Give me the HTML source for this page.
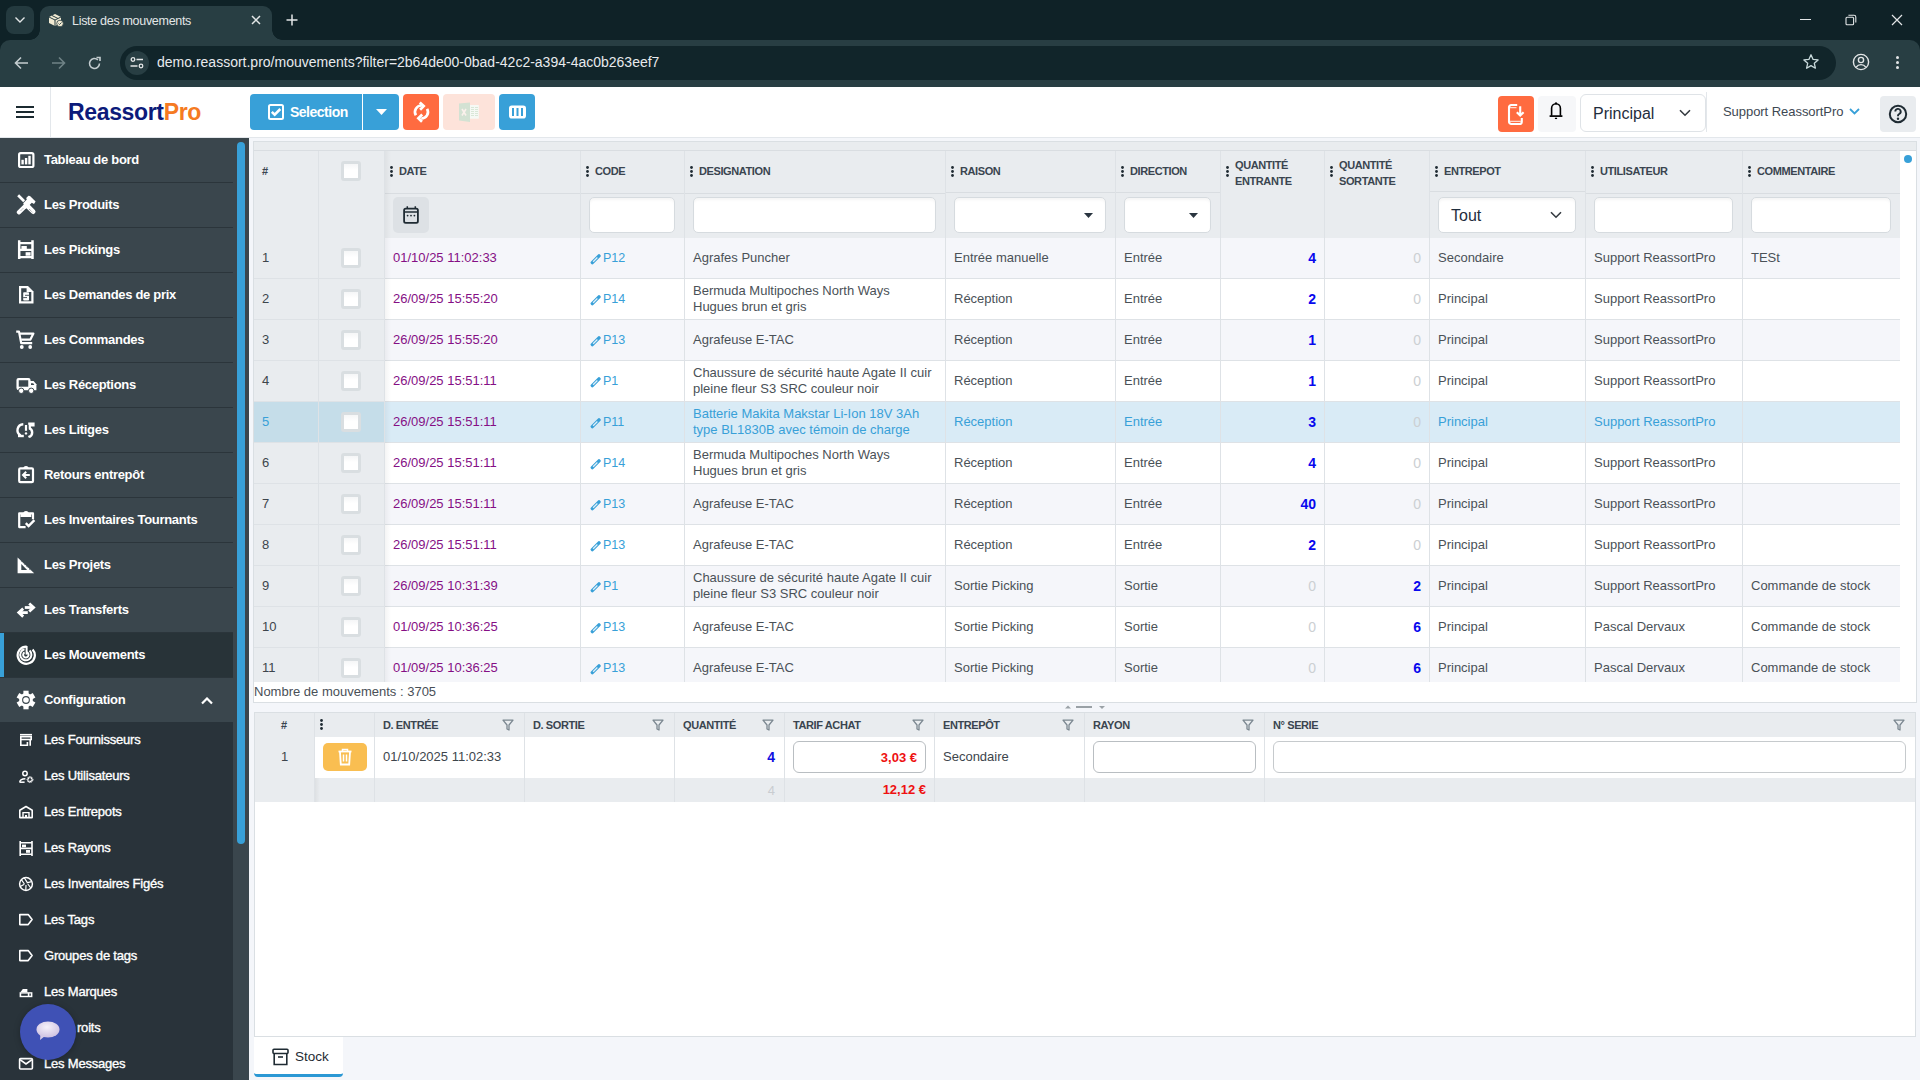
<!DOCTYPE html>
<html><head><meta charset="utf-8">
<style>
*{box-sizing:border-box;margin:0;padding:0}
html,body{width:1920px;height:1080px;overflow:hidden;background:#f4f6fa;font-family:"Liberation Sans",sans-serif;position:relative}
.abs{position:absolute}
svg{display:block}
/* chrome */
#tabstrip{left:0;top:0;width:1920px;height:52px;background:#0f2227}
#tabbtn{left:6px;top:6px;width:28px;height:28px;border-radius:8px;background:#243a3f}
#tab{left:40px;top:6px;width:232px;height:34px;background:#283e43;border-radius:9px 9px 0 0}
#tab:before,#tab:after{content:"";position:absolute;bottom:0;width:10px;height:10px;background:radial-gradient(circle at 0 0,transparent 10px,#283e43 10.5px)}
#tab:before{left:-10px;background:radial-gradient(circle at 0 0,transparent 9.5px,#283e43 10px)}
#tab:after{right:-10px;background:radial-gradient(circle at 100% 0,transparent 9.5px,#283e43 10px)}
#tabtitle{left:72px;top:14px;font-size:12.5px;letter-spacing:-0.3px;color:#e3e6e7;white-space:nowrap}
#toolbar{left:0;top:40px;width:1920px;height:47px;background:#283e43;border-radius:10px 10px 0 0}
#omni{left:120px;top:46px;width:1716px;height:34px;border-radius:17px;background:#11252a}
#siteinfo{left:125px;top:51px;width:24px;height:24px;border-radius:12px;background:#283e43}
#url{left:157px;top:54px;font-size:14px;color:#e8eaed;white-space:nowrap}
/* header */
#header{left:0;top:87px;width:1920px;height:51px;background:#fff;border-bottom:1px solid #e3e7eb}
#hdiv{left:50px;top:87px;width:1px;height:50px;background:#e3e7eb}
#logo{left:68px;top:99px;font-size:23px;font-weight:bold;color:#0c1a7a;letter-spacing:-0.35px;white-space:nowrap}
#logo span{color:#f57a22}
.btn{position:absolute;border-radius:4px}
/* sidebar */
#sidebar{left:0;top:138px;width:249px;height:942px;background:#3a464d;overflow:hidden}
.mi{position:absolute;left:0;width:233px;height:45px;border-bottom:1px solid #2b353b;color:#fff;font-weight:bold;font-size:13px;letter-spacing:-0.3px}
.mi .t{position:absolute;left:44px;top:14px;white-space:nowrap}
.mi svg{position:absolute;left:17px;top:13px}
.si{position:absolute;left:0;width:233px;height:36px;color:#fff;font-size:13px;letter-spacing:-0.2px;-webkit-text-stroke:0.35px #fff}
.si .t{position:absolute;left:44px;top:10px;white-space:nowrap}
.si svg{position:absolute;left:17px;top:10px}
#sbscroll{left:237px;top:142px;width:8px;height:702px;border-radius:4px;background:#38a0d8}
</style></head><body>
<div id="tabstrip" class="abs"></div>
<div id="tabbtn" class="abs"></div>
<div id="tab" class="abs"></div>
<div id="tabtitle" class="abs">Liste des mouvements</div>
<div id="toolbar" class="abs"></div>
<div id="omni" class="abs"></div>
<div id="siteinfo" class="abs"></div>

<svg class="abs" style="left:14px;top:15px" width="12" height="10" viewBox="0 0 12 10"><path d="M1.5 2.5l4.5 4.5 4.5-4.5" fill="none" stroke="#e3e6e7" stroke-width="1.4"/></svg>
<svg class="abs" style="left:48px;top:13px" width="16" height="14" viewBox="0 0 16 14"><path d="M1 4l6-3 6 3v6l-6 3-6-3z" fill="#f1ead2"/><path d="M1 4l6 3 6-3M7 7v6M4 2.5l6 3" stroke="#283e43" stroke-width="1" fill="none"/><circle cx="12" cy="10.5" r="3.3" fill="#f1ead2" stroke="#283e43" stroke-width="0.8"/><path d="M10.5 10.5l1 1 2-2" stroke="#283e43" stroke-width="0.9" fill="none"/></svg>
<svg class="abs" style="left:251px;top:15px" width="10" height="10" viewBox="0 0 10 10"><path d="M1 1l8 8M9 1l-8 8" stroke="#e3e6e7" stroke-width="1.5"/></svg>
<svg class="abs" style="left:286px;top:14px" width="12" height="12" viewBox="0 0 12 12"><path d="M6 0.5v11M0.5 6h11" stroke="#e3e6e7" stroke-width="1.5"/></svg>
<!-- window controls -->
<div class="abs" style="left:1800px;top:19px;width:11px;height:1px;background:#e3e6e7"></div>
<svg class="abs" style="left:1844px;top:13px" width="14" height="14" viewBox="0 0 14 14"><rect x="2" y="4.2" width="7.6" height="7.6" rx="1" fill="none" stroke="#e3e6e7" stroke-width="1.1"/><path d="M4.4 2.2h5.6a1.8 1.8 0 0 1 1.8 1.8v5.6" fill="none" stroke="#e3e6e7" stroke-width="1.1"/></svg>
<svg class="abs" style="left:1891px;top:14px" width="12" height="12" viewBox="0 0 12 12"><path d="M1 1l10 10M11 1L1 11" stroke="#e3e6e7" stroke-width="1.2"/></svg>
<!-- nav -->
<svg class="abs" style="left:14px;top:56px" width="15" height="14" viewBox="0 0 15 14"><path d="M14 7H2M7 1.5L1.5 7 7 12.5" fill="none" stroke="#c4cdd0" stroke-width="1.6"/></svg>
<svg class="abs" style="left:51px;top:56px" width="15" height="14" viewBox="0 0 15 14"><path d="M1 7h12M8 1.5L13.5 7 8 12.5" fill="none" stroke="#6f8286" stroke-width="1.6"/></svg>
<svg class="abs" style="left:87px;top:56px" width="15" height="15" viewBox="0 0 15 15"><path d="M12.5 7.5a5 5 0 1 1-1.6-3.7" fill="none" stroke="#c4cdd0" stroke-width="1.6"/><path d="M9.5 1.5h3.5v3.5" fill="none" stroke="#c4cdd0" stroke-width="1.6"/></svg>
<svg class="abs" style="left:130px;top:56px" width="14" height="14" viewBox="0 0 14 14"><circle cx="3" cy="3.5" r="1.8" fill="none" stroke="#e3e6e7" stroke-width="1.3"/><path d="M6.5 3.5h6.5M0.5 10h7" stroke="#e3e6e7" stroke-width="1.3"/><circle cx="11" cy="10" r="1.8" fill="none" stroke="#e3e6e7" stroke-width="1.3"/></svg>
<svg class="abs" style="left:1802px;top:53px" width="18" height="18" viewBox="0 0 18 18"><path d="M9 1.8l2.1 4.6 5 .5-3.8 3.4 1.1 4.9L9 12.6l-4.4 2.6 1.1-4.9L1.9 6.9l5-.5z" fill="none" stroke="#c9dadc" stroke-width="1.3" stroke-linejoin="round"/></svg>
<svg class="abs" style="left:1852px;top:53px" width="18" height="18" viewBox="0 0 18 18"><circle cx="9" cy="9" r="7.6" fill="none" stroke="#e3e6e7" stroke-width="1.4"/><circle cx="9" cy="7" r="2.6" fill="none" stroke="#e3e6e7" stroke-width="1.4"/><path d="M4.2 14.2c1.2-1.8 2.8-2.6 4.8-2.6s3.6.8 4.8 2.6" fill="none" stroke="#e3e6e7" stroke-width="1.4"/></svg>
<div class="abs" style="left:1896px;top:56px;width:3px;height:3px;border-radius:2px;background:#e3e6e7"></div>
<div class="abs" style="left:1896px;top:61px;width:3px;height:3px;border-radius:2px;background:#e3e6e7"></div>
<div class="abs" style="left:1896px;top:66px;width:3px;height:3px;border-radius:2px;background:#e3e6e7"></div>
<div id="url" class="abs">demo.reassort.pro/mouvements?filter=2b64de00-0bad-42c2-a394-4ac0b263eef7</div>

<div id="header" class="abs"></div>
<div id="hdiv" class="abs"></div>
<div id="logo" class="abs">Reassort<span>Pro</span></div>
<!-- hamburger -->
<div class="abs" style="left:16px;top:106px;width:18px;height:2px;background:#1b2a30"></div>
<div class="abs" style="left:16px;top:111px;width:18px;height:2px;background:#1b2a30"></div>
<div class="abs" style="left:16px;top:116px;width:18px;height:2px;background:#1b2a30"></div>
<!-- selection button -->
<div class="btn" style="left:250px;top:94px;width:149px;height:36px;background:#38a0d8"></div>
<div class="abs" style="left:362px;top:94px;width:1px;height:36px;background:#fff"></div>
<svg class="abs" style="left:268px;top:104px" width="16" height="16" viewBox="0 0 16 16"><rect x="1" y="1" width="14" height="14" rx="1.5" fill="none" stroke="#fff" stroke-width="2"/><path d="M3.8 7.8l2.9 2.9L12.3 5" fill="none" stroke="#fff" stroke-width="2.5"/></svg>
<div class="abs" style="left:290px;top:104px;font-size:14px;font-weight:bold;color:#fff;letter-spacing:-0.5px">Selection</div>
<svg class="abs" style="left:376px;top:109px" width="11" height="6" viewBox="0 0 11 6"><path d="M0 0h11L5.5 6z" fill="#fff"/></svg>
<!-- refresh -->
<div class="btn" style="left:403px;top:94px;width:36px;height:36px;background:#ff6b40"></div>
<svg class="abs" style="left:403px;top:94px" width="36" height="36" viewBox="0 0 36 36"><path d="M12.9 21.3A6.5 6.5 0 0 1 18.8 11.5" fill="none" stroke="#fff" stroke-width="2.7"/><path d="M16.8 8.4l3.9 3.7-3.6 3.6" fill="none" stroke="#fff" stroke-width="2.7"/><path d="M24.1 14.8A6.5 6.5 0 0 1 18.2 24.5" fill="none" stroke="#fff" stroke-width="2.7"/><path d="M19.2 20.5l-3.8 3.7 3.6 3.5" fill="none" stroke="#fff" stroke-width="2.7"/></svg>
<!-- excel disabled -->
<div class="btn" style="left:443px;top:94px;width:52px;height:36px;background:#fde3da"></div>
<svg class="abs" style="left:458px;top:101px" width="22" height="22" viewBox="0 0 22 22"><path d="M1 2.6L12 1.5v19.5L1 19.5z" fill="#d3e2d3"/><rect x="12" y="4" width="8.8" height="13.7" fill="#f6f9f5"/><path d="M13 6.5h3M17 6.5h3M13 8.5h3M17 8.5h3M13 10.5h3M17 10.5h3M13 12.5h3M17 12.5h3M13 14.5h3M17 14.5h3" stroke="#d9e7d7" stroke-width="1"/><path d="M4 8l4 6.5M8 8l-4 6.5" stroke="#fbf1ec" stroke-width="1.6"/></svg>
<!-- columns -->
<div class="btn" style="left:499px;top:94px;width:36px;height:36px;background:#38a0d8"></div>
<svg class="abs" style="left:508px;top:104px" width="20" height="16" viewBox="0 0 20 16"><rect x="1" y="1.5" width="17" height="13" rx="2.8" fill="#fff"/><rect x="4" y="4" width="2" height="8" fill="#38a0d8"/><rect x="8.5" y="4" width="2" height="8" fill="#38a0d8"/><rect x="13" y="4" width="2" height="8" fill="#38a0d8"/></svg>

<!-- right header -->
<div class="btn" style="left:1498px;top:96px;width:36px;height:36px;background:#ff6b40"></div>
<svg class="abs" style="left:1504px;top:100px" width="24" height="28" viewBox="0 0 24 28"><path d="M13.2 5H7.3A2.3 2.3 0 0 0 5 7.3v14.4A2.3 2.3 0 0 0 7.3 24h8.2a2.3 2.3 0 0 0 2.3-2.3V18" fill="none" stroke="#fff" stroke-width="2.1"/><path d="M6 7.6h6.5M6 21.4h11" stroke="#ffd9cc" stroke-width="1.1"/><path d="M16.2 6.2v9.2M12.8 12.2l3.4 3.4 3.4-3.4" fill="none" stroke="#fff" stroke-width="2.1"/></svg>
<div class="btn" style="left:1538px;top:96px;width:38px;height:36px;background:#f6f7f9"></div>
<svg class="abs" style="left:1548px;top:100px" width="16" height="20" viewBox="0 0 16 20"><path d="M3.6 15.8V8.2a4.4 4.4 0 0 1 8.8 0v7.6" fill="none" stroke="#000" stroke-width="1.6"/><circle cx="8" cy="3.4" r="1.1" fill="#000"/><path d="M1.6 16.1h12.8" stroke="#000" stroke-width="1.7"/><path d="M6.9 18.4h2.2" stroke="#000" stroke-width="1.3"/></svg>
<div class="abs" style="left:1580px;top:94px;width:126px;height:38px;border:1px solid #dfe3e7;border-radius:6px;background:#fff"></div>
<div class="abs" style="left:1593px;top:105px;font-size:16px;color:#1f2d3d">Principal</div>
<svg class="abs" style="left:1679px;top:109px" width="12" height="8" viewBox="0 0 12 8"><path d="M1 1.2l5 5 5-5" fill="none" stroke="#343a40" stroke-width="1.6"/></svg>
<div class="abs" style="left:1706px;top:92px;width:1px;height:40px;background:#e3e7eb"></div>
<div class="abs" style="left:1723px;top:104px;font-size:13px;color:#3d4852;letter-spacing:-0.05px">Support ReassortPro</div>
<svg class="abs" style="left:1849px;top:108px" width="11" height="7" viewBox="0 0 11 7"><path d="M1 1l4.5 4.5L10 1" fill="none" stroke="#38a0d8" stroke-width="1.8"/></svg>
<div class="btn" style="left:1880px;top:96px;width:36px;height:36px;background:#e9ecef"></div>
<svg class="abs" style="left:1888px;top:104px" width="20" height="20" viewBox="0 0 20 20"><circle cx="10" cy="10" r="8.2" fill="none" stroke="#1f2b33" stroke-width="2"/><path d="M7.3 7.6a2.7 2.7 0 1 1 3.9 2.4c-.8.4-1.2.9-1.2 1.8v.5" fill="none" stroke="#1f2b33" stroke-width="1.9"/><circle cx="10" cy="14.8" r="1.2" fill="#1f2b33"/></svg>


<div id="sidebar" class="abs"><div class="mi" style="top:0px;"><svg width="24" height="24" viewBox="0 0 24 24" style="position:absolute;left:14px;top:8px"><rect x="5.1" y="7.1" width="14.3" height="13.9" rx="1.6" fill="none" stroke="#fff" stroke-width="2.2"/><rect x="7.4" y="13.8" width="2.4" height="4.6" fill="#fff"/><rect x="10.9" y="12" width="2.4" height="6.4" fill="#fff"/><rect x="14.3" y="9.8" width="2.4" height="8.6" fill="#fff"/></svg><span class="t">Tableau de bord</span></div><div class="mi" style="top:45px;"><svg width="24" height="24" viewBox="0 0 24 24" style="position:absolute;left:14px;top:8px"><path d="M3.2 5.2l1.9-1.9 6 6-1.9 1.9z" fill="#fff"/><path d="M14 15.5l5.2 5.2" stroke="#fff" stroke-width="4.6" stroke-linecap="round"/><path d="M5 21.3l5.6-5.6" stroke="#fff" stroke-width="4.4" stroke-linecap="round"/><path d="M9.2 12.2l3.6-3.6-.6-1.6 2.2-2.2 1.6.2 5.6 5.6-1.6 2.4-2.2-1.2-6.2 6.2z" fill="#fff"/><path d="M15.3 18.2l3 3M7 19.5l2-2" stroke="#3a464d" stroke-width=".7" stroke-dasharray="1 .8"/></svg><span class="t">Les Produits</span></div><div class="mi" style="top:90px;"><svg width="24" height="24" viewBox="0 0 24 24" style="position:absolute;left:14px;top:8px"><path d="M5.2 4.3V23M18.5 4.3V23" stroke="#fff" stroke-width="2.5"/><path d="M5 7.2h13.7M5 13.9h13.7M5 21.1h13.7" stroke="#fff" stroke-width="2.2"/><rect x="7.4" y="10" width="5.4" height="3" fill="#fff"/><rect x="11.6" y="16.2" width="5" height="3.5" fill="#fff"/></svg><span class="t">Les Pickings</span></div><div class="mi" style="top:135px;"><svg width="24" height="24" viewBox="0 0 24 24" style="position:absolute;left:14px;top:8px"><path d="M5 5H14l5.5 5.5v12H5z" fill="#fff"/><path d="M7.2 7.2h5.4V11h4.7v9.3H7.2z" fill="#3a464d"/><rect x="9.2" y="11.2" width="5.8" height="8.3" rx=".8" fill="#fff"/><path d="M11 14.3h4M9.2 16.6h3.8" stroke="#3a464d" stroke-width=".9"/></svg><span class="t">Les Demandes de prix</span></div><div class="mi" style="top:180px;"><svg width="24" height="24" viewBox="0 0 24 24" style="position:absolute;left:14px;top:8px"><path d="M2.2 5.6h2.8l2.2 11.5h11" fill="none" stroke="#fff" stroke-width="2.2" stroke-linejoin="round"/><path d="M5.8 7.6h13.6l-3 6H7.2" fill="none" stroke="#fff" stroke-width="2.2" stroke-linejoin="round"/><circle cx="7.8" cy="21" r="1.9" fill="#fff"/><circle cx="16.2" cy="21" r="1.9" fill="#fff"/></svg><span class="t">Les Commandes</span></div><div class="mi" style="top:225px;"><svg width="24" height="24" viewBox="0 0 24 24" style="position:absolute;left:14px;top:8px"><rect x="3.6" y="8.1" width="11.8" height="10" rx="1" fill="none" stroke="#fff" stroke-width="2.3"/><path d="M15 10h4.6l2.8 3.3V19.3H15z" fill="#fff"/><path d="M17 12.2h2.2l1.2 1.8H17z" fill="#3a464d"/><path d="M3 17h12.5" stroke="#fff" stroke-width="2.6"/><circle cx="7.2" cy="19.8" r="2.7" fill="#fff" stroke="#3a464d" stroke-width="1"/><circle cx="17.2" cy="19.8" r="2.7" fill="#fff" stroke="#3a464d" stroke-width="1"/></svg><span class="t">Les Réceptions</span></div><div class="mi" style="top:270px;"><svg width="24" height="24" viewBox="0 0 24 24" style="position:absolute;left:14px;top:8px"><path d="M9.3 8.2a6 6 0 0 0-2.6 11.3" fill="none" stroke="#fff" stroke-width="2.4"/><path d="M4 18.8h5.8v2.4H4z" fill="#fff"/><path d="M12 9v5.8" stroke="#fff" stroke-width="2.2"/><circle cx="12" cy="17.4" r="1.2" fill="#fff"/><path d="M14.2 7.7h5.3v1.8h-3.7v3" fill="none" stroke="#fff" stroke-width="2.2"/><path d="M15 12.2a4.5 4.5 0 0 1 0 8.6" fill="none" stroke="#fff" stroke-width="2.4"/><path d="M14.2 19.8h2.4v1.6h-2.4z" fill="#fff"/></svg><span class="t">Les Litiges</span></div><div class="mi" style="top:315px;"><svg width="24" height="24" viewBox="0 0 24 24" style="position:absolute;left:14px;top:8px"><rect x="5.2" y="7.4" width="13.8" height="13.7" rx="1.2" fill="none" stroke="#fff" stroke-width="2.2"/><path d="M9.3 7.6a2.7 2.7 0 0 1 5.4 0z" fill="#fff"/><path d="M12.2 10.8L9 14l3.2 3.2M9.5 14h6.3" fill="none" stroke="#fff" stroke-width="2"/></svg><span class="t">Retours entrepôt</span></div><div class="mi" style="top:360px;"><svg width="24" height="24" viewBox="0 0 24 24" style="position:absolute;left:14px;top:8px"><path d="M11.6 21.1H5.2V7.4h13.8v5.8" fill="none" stroke="#fff" stroke-width="2.2" stroke-linejoin="round"/><path d="M9.3 7.6a2.7 2.7 0 0 1 5.4 0z" fill="#fff"/><rect x="6.5" y="7.4" width="10.8" height="3.6" fill="#fff"/><path d="M11.8 17.2l2.8 2.8 5.8-5.8" fill="none" stroke="#fff" stroke-width="2.4"/></svg><span class="t">Les Inventaires Tournants</span></div><div class="mi" style="top:405px;"><svg width="24" height="24" viewBox="0 0 24 24" style="position:absolute;left:14px;top:8px"><path d="M3.6 6.6V22.2H20.2z M7.3 13v6h5.8z" fill="#fff" fill-rule="evenodd"/><path d="M7.5 10.3l.9.9M10 12.8l.9.9M12.6 15.4l.9.9M15.2 18l.9.9" stroke="#3a464d" stroke-width=".8"/></svg><span class="t">Les Projets</span></div><div class="mi" style="top:450px;"><svg width="24" height="24" viewBox="0 0 24 24" style="position:absolute;left:14px;top:8px"><path d="M10.8 11.5h7.6" stroke="#fff" stroke-width="2.8"/><path d="M15.2 7.5l4.4 4-4.4 4" fill="none" stroke="#fff" stroke-width="2.8"/><path d="M13.8 16.6H6.2" stroke="#fff" stroke-width="2.8"/><path d="M9.2 12.6l-4.4 4 4.4 4" fill="none" stroke="#fff" stroke-width="2.8"/></svg><span class="t">Les Transferts</span></div><div class="mi" style="top:495px;background:#283338;"><div class="abs" style="left:0;top:0;width:4px;height:44px;background:#38a0d8"></div><svg width="24" height="24" viewBox="0 0 24 24" style="position:absolute;left:14px;top:8px"><path d="M12.6 5.6A8.6 8.6 0 1 0 18.6 8.4" fill="none" stroke="#fff" stroke-width="2.2"/><path d="M10.5 8.3A5.6 5.6 0 1 0 15.6 9.6" fill="none" stroke="#fff" stroke-width="2"/><path d="M10.6 11.4A2.7 2.7 0 1 0 12.6 11.2" fill="none" stroke="#fff" stroke-width="2"/><path d="M12.6 5v8.6" stroke="#fff" stroke-width="2"/></svg><span class="t">Les Mouvements</span></div><div class="mi" style="top:540px;border-bottom:none;"><svg class="abs" style="left:201px;top:19px" width="12" height="8" viewBox="0 0 12 8"><path d="M1 6.5l5-5 5 5" fill="none" stroke="#fff" stroke-width="2.2"/></svg><svg width="24" height="24" viewBox="0 0 24 24" style="position:absolute;left:14px;top:8px"><circle cx="12" cy="14" r="6.9" fill="#fff"/><rect x="9.4" y="4.7" width="5.2" height="5" fill="#fff" transform="rotate(0 12 14)"/><rect x="9.4" y="4.7" width="5.2" height="5" fill="#fff" transform="rotate(60 12 14)"/><rect x="9.4" y="4.7" width="5.2" height="5" fill="#fff" transform="rotate(120 12 14)"/><rect x="9.4" y="4.7" width="5.2" height="5" fill="#fff" transform="rotate(180 12 14)"/><rect x="9.4" y="4.7" width="5.2" height="5" fill="#fff" transform="rotate(240 12 14)"/><rect x="9.4" y="4.7" width="5.2" height="5" fill="#fff" transform="rotate(300 12 14)"/><circle cx="12" cy="14" r="3.9" fill="#3a464d"/><circle cx="12" cy="14" r="2.8" fill="#fff"/></svg><span class="t">Configuration</span></div><div class="abs" style="left:0;top:584px;width:233px;height:400px;background:#29333a"></div><div class="si" style="top:584px"><svg width="16" height="16" viewBox="0 0 16 16" style="position:absolute;left:18px;top:10px"><path d="M2 2.7h12" stroke="#fff" stroke-width="1.6"/><rect x="2.8" y="4.7" width="10.4" height="2.8" fill="none" stroke="#fff" stroke-width="1.6"/><path d="M2.8 7.5v5.7h6.6V10M12.2 7.5v6.2" fill="none" stroke="#fff" stroke-width="1.6"/></svg><span class="t">Les Fournisseurs</span></div><div class="si" style="top:620px"><svg width="16" height="16" viewBox="0 0 16 16" style="position:absolute;left:18px;top:10px"><circle cx="7" cy="5.5" r="2.2" fill="none" stroke="#fff" stroke-width="1.5"/><path d="M1.8 14.2c0-2 1.5-3.2 5.6-3.4" fill="none" stroke="#fff" stroke-width="1.5"/><path d="M1.6 14.2h5" stroke="#fff" stroke-width="1.5"/><circle cx="12" cy="11.6" r="2.1" fill="none" stroke="#fff" stroke-width="1.6" stroke-dasharray="1.3 .35"/><circle cx="12" cy="11.6" r="3" fill="none" stroke="#fff" stroke-width=".9" stroke-dasharray="1 1.2"/></svg><span class="t">Les Utilisateurs</span></div><div class="si" style="top:656px"><svg width="16" height="16" viewBox="0 0 16 16" style="position:absolute;left:18px;top:10px"><path d="M1.8 13.6V6.2L8 2.5l6.2 3.7v7.4z" fill="none" stroke="#fff" stroke-width="1.6" stroke-linejoin="round"/><path d="M5 13.6V8.6h6v5" fill="none" stroke="#fff" stroke-width="1.4"/><rect x="7" y="11" width="2" height="2.4" fill="#fff"/></svg><span class="t">Les Entrepots</span></div><div class="si" style="top:692px"><svg width="16" height="16" viewBox="0 0 16 16" style="position:absolute;left:18px;top:10px"><path d="M2.2 1v15M14 1v15M2.2 2.8h11.8M2.2 8.4h11.8M2.2 14.2h11.8" stroke="#fff" stroke-width="1.6"/><rect x="4" y="4.6" width="4" height="2.6" fill="#fff"/><rect x="8" y="10" width="4" height="2.8" fill="#fff"/></svg><span class="t">Les Rayons</span></div><div class="si" style="top:728px"><svg width="16" height="16" viewBox="0 0 16 16" style="position:absolute;left:18px;top:10px"><circle cx="8" cy="8" r="6.4" fill="none" stroke="#fff" stroke-width="1.5"/><path d="M6.4 2l2.8 4.4M13.6 5.6L8.7 6.8M12.8 12l-3-4M7.8 14L8 9M2.2 10.6l4.2-2.4M3.4 3.6l3 4.4" stroke="#fff" stroke-width="1.2"/></svg><span class="t">Les Inventaires Figés</span></div><div class="si" style="top:764px"><svg width="16" height="16" viewBox="0 0 16 16" style="position:absolute;left:18px;top:10px"><path d="M1.8 2.6h8.4l3.9 5-3.9 5H1.8z" fill="none" stroke="#fff" stroke-width="1.6" stroke-linejoin="round"/></svg><span class="t">Les Tags</span></div><div class="si" style="top:800px"><svg width="16" height="16" viewBox="0 0 16 16" style="position:absolute;left:18px;top:10px"><path d="M1.8 2.6h8.4l3.9 5-3.9 5H1.8z" fill="none" stroke="#fff" stroke-width="1.6" stroke-linejoin="round"/></svg><span class="t">Groupes de tags</span></div><div class="si" style="top:836px"><svg width="16" height="16" viewBox="0 0 16 16" style="position:absolute;left:18px;top:10px"><path d="M1.6 13.2V8.2h12.8v5z" fill="#fff"/><path d="M2.4 8.2L4.8 5h4.6v3.2" fill="#fff"/><path d="M3.2 9.6h6.6v2.2H3.2z" fill="#29333a"/><path d="M11.4 9.4h1.4v2.4h-1.4z" fill="#29333a"/></svg><span class="t">Les Marques</span></div><div class="si" style="top:872px"><svg width="16" height="16" viewBox="0 0 16 16" style="position:absolute;left:18px;top:10px"></svg><span class="t"><span style="visibility:hidden">Les D</span>roits</span></div><div class="si" style="top:908px"><svg width="16" height="16" viewBox="0 0 16 16" style="position:absolute;left:18px;top:10px"><rect x="1.6" y="2.6" width="12.8" height="10.4" rx="1" fill="none" stroke="#fff" stroke-width="1.6"/><path d="M2 3.6l6 4.4 6-4.4" fill="none" stroke="#fff" stroke-width="1.6"/></svg><span class="t">Les Messages</span></div><div class="abs" style="left:233px;top:0;width:16px;height:942px;background:#3a464d"></div></div>
<div id="sbscroll" class="abs"></div>
<div class="abs" style="left:20px;top:1004px;width:56px;height:56px;border-radius:28px;background:#3f51b5;box-shadow:0 1px 6px rgba(0,0,0,.25)"></div>
<svg class="abs" style="left:36px;top:1021px" width="24" height="20" viewBox="0 0 24 20"><defs><radialGradient id="cg" cx="45%" cy="35%" r="70%"><stop offset="0" stop-color="#f6f2fa"/><stop offset="1" stop-color="#cdbfe0"/></radialGradient></defs><ellipse cx="12" cy="8.5" rx="11.5" ry="8" fill="url(#cg)"/><path d="M4.5 13l-.5 6 5-4z" fill="#d6cbe6"/></svg>
















<!--LOWER-->
<div class="abs" style="left:254px;top:712px;width:1662px;height:325px;background:#fff;border:1px solid #dadfe3"></div>
<div class="abs" style="left:255px;top:713px;width:1660px;height:24px;background:#e9ecef"></div>
<div class="abs" style="left:255px;top:778px;width:1660px;height:24px;background:#e9ecef"></div>
<div class="abs" style="left:255px;top:737px;width:59px;height:41px;background:#e9ecef"></div>
<div class="abs" style="left:314px;top:713px;width:1px;height:89px;background:#dee2e6"></div>
<div class="abs" style="left:374px;top:713px;width:1px;height:89px;background:#dee2e6"></div>
<div class="abs" style="left:524px;top:713px;width:1px;height:89px;background:#dee2e6"></div>
<div class="abs" style="left:674px;top:713px;width:1px;height:89px;background:#dee2e6"></div>
<div class="abs" style="left:784px;top:713px;width:1px;height:89px;background:#dee2e6"></div>
<div class="abs" style="left:934px;top:713px;width:1px;height:89px;background:#dee2e6"></div>
<div class="abs" style="left:1084px;top:713px;width:1px;height:89px;background:#dee2e6"></div>
<div class="abs" style="left:1264px;top:713px;width:1px;height:89px;background:#dee2e6"></div>
<div class="abs" style="left:281px;top:719px;font-size:11px;font-weight:bold;color:#3a4550;letter-spacing:-0.4px;white-space:nowrap">#</div>
<svg class="abs" style="left:320px;top:719px" width="3" height="11" viewBox="0 0 3 11"><circle cx="1.5" cy="1.5" r="1.4" fill="#1f2b33"/><circle cx="1.5" cy="5.5" r="1.4" fill="#1f2b33"/><circle cx="1.5" cy="9.5" r="1.4" fill="#1f2b33"/></svg>
<div class="abs" style="left:383px;top:719px;font-size:11px;font-weight:bold;color:#3a4550;letter-spacing:-0.4px;white-space:nowrap">D. ENTRÉE</div>
<div class="abs" style="left:502px;top:719px"><svg width="12" height="12" viewBox="0 0 12 12"><path d="M1 1.2h10L7 6v5L5 10V6z" fill="none" stroke="#7b8790" stroke-width="1.3" stroke-linejoin="round"/></svg></div>
<div class="abs" style="left:533px;top:719px;font-size:11px;font-weight:bold;color:#3a4550;letter-spacing:-0.4px;white-space:nowrap">D. SORTIE</div>
<div class="abs" style="left:652px;top:719px"><svg width="12" height="12" viewBox="0 0 12 12"><path d="M1 1.2h10L7 6v5L5 10V6z" fill="none" stroke="#7b8790" stroke-width="1.3" stroke-linejoin="round"/></svg></div>
<div class="abs" style="left:683px;top:719px;font-size:11px;font-weight:bold;color:#3a4550;letter-spacing:-0.4px;white-space:nowrap">QUANTITÉ</div>
<div class="abs" style="left:762px;top:719px"><svg width="12" height="12" viewBox="0 0 12 12"><path d="M1 1.2h10L7 6v5L5 10V6z" fill="none" stroke="#7b8790" stroke-width="1.3" stroke-linejoin="round"/></svg></div>
<div class="abs" style="left:793px;top:719px;font-size:11px;font-weight:bold;color:#3a4550;letter-spacing:-0.4px;white-space:nowrap">TARIF ACHAT</div>
<div class="abs" style="left:912px;top:719px"><svg width="12" height="12" viewBox="0 0 12 12"><path d="M1 1.2h10L7 6v5L5 10V6z" fill="none" stroke="#7b8790" stroke-width="1.3" stroke-linejoin="round"/></svg></div>
<div class="abs" style="left:943px;top:719px;font-size:11px;font-weight:bold;color:#3a4550;letter-spacing:-0.4px;white-space:nowrap">ENTREPÔT</div>
<div class="abs" style="left:1062px;top:719px"><svg width="12" height="12" viewBox="0 0 12 12"><path d="M1 1.2h10L7 6v5L5 10V6z" fill="none" stroke="#7b8790" stroke-width="1.3" stroke-linejoin="round"/></svg></div>
<div class="abs" style="left:1093px;top:719px;font-size:11px;font-weight:bold;color:#3a4550;letter-spacing:-0.4px;white-space:nowrap">RAYON</div>
<div class="abs" style="left:1242px;top:719px"><svg width="12" height="12" viewBox="0 0 12 12"><path d="M1 1.2h10L7 6v5L5 10V6z" fill="none" stroke="#7b8790" stroke-width="1.3" stroke-linejoin="round"/></svg></div>
<div class="abs" style="left:1273px;top:719px;font-size:11px;font-weight:bold;color:#3a4550;letter-spacing:-0.4px;white-space:nowrap">N° SERIE</div>
<div class="abs" style="left:1893px;top:719px"><svg width="12" height="12" viewBox="0 0 12 12"><path d="M1 1.2h10L7 6v5L5 10V6z" fill="none" stroke="#7b8790" stroke-width="1.3" stroke-linejoin="round"/></svg></div>
<div class="abs" style="left:281px;top:749px;font-size:13px;color:#3d454c">1</div>
<div class="abs" style="left:323px;top:743px;width:44px;height:28px;border-radius:5px;background:#f9be51"></div>
<svg class="abs" style="left:337px;top:748px" width="16" height="18" viewBox="0 0 16 18"><path d="M1.5 3.5h13" stroke="#fff" stroke-width="1.8"/><path d="M5.5 3.2V1.5h5v1.7" fill="none" stroke="#fff" stroke-width="1.5"/><path d="M3 4l.8 12.5h8.4L13 4" fill="none" stroke="#fff" stroke-width="1.8"/><path d="M6.5 6.5v7M9.5 6.5v7" stroke="#fff" stroke-width="1.5"/></svg>
<div class="abs" style="left:383px;top:749px;font-size:13px;color:#3d454c;white-space:nowrap">01/10/2025 11:02:33</div>
<div class="abs" style="left:735px;top:749px;width:40px;text-align:right;font-size:14px;font-weight:bold;color:#1010e0">4</div>
<div class="abs" style="left:793px;top:741px;width:133px;height:32px;border:1px solid #b9bec2;border-radius:6px;background:#fff"></div>
<div class="abs" style="left:837px;top:750px;width:80px;text-align:right;font-size:13px;font-weight:bold;color:#ee1111;white-space:nowrap">3,03 €</div>
<div class="abs" style="left:943px;top:749px;font-size:13px;color:#3d454c">Secondaire</div>
<div class="abs" style="left:1093px;top:741px;width:163px;height:32px;border:1px solid #b9bec2;border-radius:6px;background:#fff"></div>
<div class="abs" style="left:1273px;top:741px;width:633px;height:32px;border:1px solid #c6cacd;border-radius:6px;background:#fff"></div>
<div class="abs" style="left:735px;top:783px;width:40px;text-align:right;font-size:13px;color:#c9cdd1">4</div>
<div class="abs" style="left:826px;top:782px;width:100px;text-align:right;font-size:13px;font-weight:bold;color:#ee1111;white-space:nowrap">12,12 €</div>
<div class="abs" style="left:315px;top:778px;width:5px;height:24px;background:linear-gradient(90deg,rgba(0,0,0,.05),rgba(0,0,0,0))"></div>
<div class="abs" style="left:254px;top:1037px;width:89px;height:40px;background:#fff;border-radius:0 0 4px 4px;border-bottom:3px solid #2b98d4"></div>
<svg class="abs" style="left:272px;top:1048px" width="17" height="18" viewBox="0 0 17 18"><rect x="1" y="1.2" width="15" height="4.3" rx="1" fill="none" stroke="#1f2b33" stroke-width="1.6"/><path d="M2.2 5.5v11h12.6v-11" fill="none" stroke="#1f2b33" stroke-width="1.6"/><path d="M6 9h5" stroke="#1f2b33" stroke-width="1.6"/></svg>
<div class="abs" style="left:295px;top:1049px;font-size:13.5px;color:#1f2b33">Stock</div>
<!--/LOWER-->
<!--TABLE-->
<div class="abs" style="left:253px;top:141px;width:1664px;height:562px;background:#fff;border:1px solid #dadfe3"></div>
<div class="abs" style="left:254px;top:142px;width:1662px;height:9px;background:#e9ecef;border-bottom:1px solid #d9dde1"></div>
<div class="abs" style="left:254px;top:151px;width:1646px;height:87px;background:#e9ecef"></div>
<div class="abs" style="left:384px;top:193px;width:196px;height:1px;background:#d9dde1"></div>
<div class="abs" style="left:580px;top:193px;width:104px;height:1px;background:#d9dde1"></div>
<div class="abs" style="left:684px;top:193px;width:261px;height:1px;background:#d9dde1"></div>
<div class="abs" style="left:945px;top:192px;width:170px;height:1px;background:#d9dde1"></div>
<div class="abs" style="left:1115px;top:192px;width:105px;height:1px;background:#d9dde1"></div>
<div class="abs" style="left:1429px;top:191px;width:156px;height:1px;background:#d9dde1"></div>
<div class="abs" style="left:1585px;top:193px;width:157px;height:1px;background:#d9dde1"></div>
<div class="abs" style="left:1742px;top:193px;width:158px;height:1px;background:#d9dde1"></div>
<div class="abs" style="left:254px;top:238px;width:1662px;height:444px;overflow:hidden">
<div class="abs" style="left:0;top:0px;width:1646px;height:40px;background:#f5f6fa"></div>
<div class="abs" style="left:0;top:0px;width:130px;height:40px;background:#e9ecef"></div>
<div class="abs" style="left:0;top:40px;width:1646px;height:1px;background:#dee2e6"></div>
<div class="abs" style="left:8px;top:0px;height:40px;line-height:40px;font-size:13px;color:#3d454c;white-space:nowrap;">1</div>
<div class="abs" style="left:87px;top:10px;width:20px;height:20px;border:3px solid #d9dee1;background:linear-gradient(#f5f6f7,#fff 45%);border-radius:3px"></div>
<div class="abs" style="left:139px;top:0px;height:40px;line-height:40px;font-size:13px;color:#850f85;white-space:nowrap;">01/10/25 11:02:33</div>
<div class="abs" style="left:336px;top:14px;width:40px;height:14px"><svg width="11" height="12" viewBox="0 0 11 12" style="position:absolute;left:0;top:1px"><path d="M2.3 9.6L9 2.9" stroke="#38a0d8" stroke-width="3.4" stroke-linecap="round"/><path d="M3.1 8.8L7.4 4.5" stroke="rgba(255,255,255,.85)" stroke-width="1.25"/></svg><span style="position:absolute;left:13px;top:-1px;font-size:12.5px;color:#38a0d8">P12</span></div>
<div class="abs" style="left:439px;top:0px;height:40px;line-height:40px;font-size:13px;color:#4a5157;white-space:nowrap;">Agrafes Puncher</div>
<div class="abs" style="left:700px;top:0px;height:40px;line-height:40px;font-size:13px;color:#4a5157;white-space:nowrap;">Entrée manuelle</div>
<div class="abs" style="left:870px;top:0px;height:40px;line-height:40px;font-size:13px;color:#4a5157;white-space:nowrap;">Entrée</div>
<div class="abs" style="left:1022px;top:0px;width:40px;height:40px;line-height:40px;text-align:right;font-size:14px;font-weight:bold;color:#0808ee">4</div>
<div class="abs" style="left:1127px;top:0px;width:40px;height:40px;line-height:40px;text-align:right;font-size:14px;color:#ccd0d3">0</div>
<div class="abs" style="left:1184px;top:0px;height:40px;line-height:40px;font-size:13px;color:#4a5157;white-space:nowrap;">Secondaire</div>
<div class="abs" style="left:1340px;top:0px;height:40px;line-height:40px;font-size:13px;color:#4a5157;white-space:nowrap;">Support ReassortPro</div>
<div class="abs" style="left:1497px;top:0px;height:40px;line-height:40px;font-size:13px;color:#4a5157;white-space:nowrap;">TESt</div>
<div class="abs" style="left:0;top:41px;width:1646px;height:40px;background:#fff"></div>
<div class="abs" style="left:0;top:41px;width:130px;height:40px;background:#e9ecef"></div>
<div class="abs" style="left:0;top:81px;width:1646px;height:1px;background:#dee2e6"></div>
<div class="abs" style="left:8px;top:41px;height:40px;line-height:40px;font-size:13px;color:#3d454c;white-space:nowrap;">2</div>
<div class="abs" style="left:87px;top:51px;width:20px;height:20px;border:3px solid #d9dee1;background:linear-gradient(#f5f6f7,#fff 45%);border-radius:3px"></div>
<div class="abs" style="left:139px;top:41px;height:40px;line-height:40px;font-size:13px;color:#850f85;white-space:nowrap;">26/09/25 15:55:20</div>
<div class="abs" style="left:336px;top:55px;width:40px;height:14px"><svg width="11" height="12" viewBox="0 0 11 12" style="position:absolute;left:0;top:1px"><path d="M2.3 9.6L9 2.9" stroke="#38a0d8" stroke-width="3.4" stroke-linecap="round"/><path d="M3.1 8.8L7.4 4.5" stroke="rgba(255,255,255,.85)" stroke-width="1.25"/></svg><span style="position:absolute;left:13px;top:-1px;font-size:12.5px;color:#38a0d8">P14</span></div>
<div class="abs" style="left:439px;top:45px;font-size:13px;line-height:16px;color:#4a5157;white-space:nowrap">Bermuda Multipoches North Ways<br>Hugues brun et gris</div>
<div class="abs" style="left:700px;top:41px;height:40px;line-height:40px;font-size:13px;color:#4a5157;white-space:nowrap;">Réception</div>
<div class="abs" style="left:870px;top:41px;height:40px;line-height:40px;font-size:13px;color:#4a5157;white-space:nowrap;">Entrée</div>
<div class="abs" style="left:1022px;top:41px;width:40px;height:40px;line-height:40px;text-align:right;font-size:14px;font-weight:bold;color:#0808ee">2</div>
<div class="abs" style="left:1127px;top:41px;width:40px;height:40px;line-height:40px;text-align:right;font-size:14px;color:#ccd0d3">0</div>
<div class="abs" style="left:1184px;top:41px;height:40px;line-height:40px;font-size:13px;color:#4a5157;white-space:nowrap;">Principal</div>
<div class="abs" style="left:1340px;top:41px;height:40px;line-height:40px;font-size:13px;color:#4a5157;white-space:nowrap;">Support ReassortPro</div>
<div class="abs" style="left:0;top:82px;width:1646px;height:40px;background:#f5f6fa"></div>
<div class="abs" style="left:0;top:82px;width:130px;height:40px;background:#e9ecef"></div>
<div class="abs" style="left:0;top:122px;width:1646px;height:1px;background:#dee2e6"></div>
<div class="abs" style="left:8px;top:82px;height:40px;line-height:40px;font-size:13px;color:#3d454c;white-space:nowrap;">3</div>
<div class="abs" style="left:87px;top:92px;width:20px;height:20px;border:3px solid #d9dee1;background:linear-gradient(#f5f6f7,#fff 45%);border-radius:3px"></div>
<div class="abs" style="left:139px;top:82px;height:40px;line-height:40px;font-size:13px;color:#850f85;white-space:nowrap;">26/09/25 15:55:20</div>
<div class="abs" style="left:336px;top:96px;width:40px;height:14px"><svg width="11" height="12" viewBox="0 0 11 12" style="position:absolute;left:0;top:1px"><path d="M2.3 9.6L9 2.9" stroke="#38a0d8" stroke-width="3.4" stroke-linecap="round"/><path d="M3.1 8.8L7.4 4.5" stroke="rgba(255,255,255,.85)" stroke-width="1.25"/></svg><span style="position:absolute;left:13px;top:-1px;font-size:12.5px;color:#38a0d8">P13</span></div>
<div class="abs" style="left:439px;top:82px;height:40px;line-height:40px;font-size:13px;color:#4a5157;white-space:nowrap;">Agrafeuse E-TAC</div>
<div class="abs" style="left:700px;top:82px;height:40px;line-height:40px;font-size:13px;color:#4a5157;white-space:nowrap;">Réception</div>
<div class="abs" style="left:870px;top:82px;height:40px;line-height:40px;font-size:13px;color:#4a5157;white-space:nowrap;">Entrée</div>
<div class="abs" style="left:1022px;top:82px;width:40px;height:40px;line-height:40px;text-align:right;font-size:14px;font-weight:bold;color:#0808ee">1</div>
<div class="abs" style="left:1127px;top:82px;width:40px;height:40px;line-height:40px;text-align:right;font-size:14px;color:#ccd0d3">0</div>
<div class="abs" style="left:1184px;top:82px;height:40px;line-height:40px;font-size:13px;color:#4a5157;white-space:nowrap;">Principal</div>
<div class="abs" style="left:1340px;top:82px;height:40px;line-height:40px;font-size:13px;color:#4a5157;white-space:nowrap;">Support ReassortPro</div>
<div class="abs" style="left:0;top:123px;width:1646px;height:40px;background:#fff"></div>
<div class="abs" style="left:0;top:123px;width:130px;height:40px;background:#e9ecef"></div>
<div class="abs" style="left:0;top:163px;width:1646px;height:1px;background:#dee2e6"></div>
<div class="abs" style="left:8px;top:123px;height:40px;line-height:40px;font-size:13px;color:#3d454c;white-space:nowrap;">4</div>
<div class="abs" style="left:87px;top:133px;width:20px;height:20px;border:3px solid #d9dee1;background:linear-gradient(#f5f6f7,#fff 45%);border-radius:3px"></div>
<div class="abs" style="left:139px;top:123px;height:40px;line-height:40px;font-size:13px;color:#850f85;white-space:nowrap;">26/09/25 15:51:11</div>
<div class="abs" style="left:336px;top:137px;width:40px;height:14px"><svg width="11" height="12" viewBox="0 0 11 12" style="position:absolute;left:0;top:1px"><path d="M2.3 9.6L9 2.9" stroke="#38a0d8" stroke-width="3.4" stroke-linecap="round"/><path d="M3.1 8.8L7.4 4.5" stroke="rgba(255,255,255,.85)" stroke-width="1.25"/></svg><span style="position:absolute;left:13px;top:-1px;font-size:12.5px;color:#38a0d8">P1</span></div>
<div class="abs" style="left:439px;top:127px;font-size:13px;line-height:16px;color:#4a5157;white-space:nowrap">Chaussure de sécurité haute Agate II cuir<br>pleine fleur S3 SRC couleur noir</div>
<div class="abs" style="left:700px;top:123px;height:40px;line-height:40px;font-size:13px;color:#4a5157;white-space:nowrap;">Réception</div>
<div class="abs" style="left:870px;top:123px;height:40px;line-height:40px;font-size:13px;color:#4a5157;white-space:nowrap;">Entrée</div>
<div class="abs" style="left:1022px;top:123px;width:40px;height:40px;line-height:40px;text-align:right;font-size:14px;font-weight:bold;color:#0808ee">1</div>
<div class="abs" style="left:1127px;top:123px;width:40px;height:40px;line-height:40px;text-align:right;font-size:14px;color:#ccd0d3">0</div>
<div class="abs" style="left:1184px;top:123px;height:40px;line-height:40px;font-size:13px;color:#4a5157;white-space:nowrap;">Principal</div>
<div class="abs" style="left:1340px;top:123px;height:40px;line-height:40px;font-size:13px;color:#4a5157;white-space:nowrap;">Support ReassortPro</div>
<div class="abs" style="left:0;top:164px;width:1646px;height:40px;background:#d9ebf6"></div>
<div class="abs" style="left:0;top:164px;width:130px;height:40px;background:#c5dde9"></div>
<div class="abs" style="left:0;top:204px;width:1646px;height:1px;background:#dee2e6"></div>
<div class="abs" style="left:8px;top:164px;height:40px;line-height:40px;font-size:13px;color:#38a0d8;white-space:nowrap;">5</div>
<div class="abs" style="left:87px;top:174px;width:20px;height:20px;border:3px solid #d9dee1;background:linear-gradient(#f5f6f7,#fff 45%);border-radius:3px"></div>
<div class="abs" style="left:139px;top:164px;height:40px;line-height:40px;font-size:13px;color:#850f85;white-space:nowrap;">26/09/25 15:51:11</div>
<div class="abs" style="left:336px;top:178px;width:40px;height:14px"><svg width="11" height="12" viewBox="0 0 11 12" style="position:absolute;left:0;top:1px"><path d="M2.3 9.6L9 2.9" stroke="#38a0d8" stroke-width="3.4" stroke-linecap="round"/><path d="M3.1 8.8L7.4 4.5" stroke="rgba(255,255,255,.85)" stroke-width="1.25"/></svg><span style="position:absolute;left:13px;top:-1px;font-size:12.5px;color:#38a0d8">P11</span></div>
<div class="abs" style="left:439px;top:168px;font-size:13px;line-height:16px;color:#38a0d8;white-space:nowrap">Batterie Makita Makstar Li-Ion 18V 3Ah<br>type BL1830B avec témoin de charge</div>
<div class="abs" style="left:700px;top:164px;height:40px;line-height:40px;font-size:13px;color:#38a0d8;white-space:nowrap;">Réception</div>
<div class="abs" style="left:870px;top:164px;height:40px;line-height:40px;font-size:13px;color:#38a0d8;white-space:nowrap;">Entrée</div>
<div class="abs" style="left:1022px;top:164px;width:40px;height:40px;line-height:40px;text-align:right;font-size:14px;font-weight:bold;color:#0808ee">3</div>
<div class="abs" style="left:1127px;top:164px;width:40px;height:40px;line-height:40px;text-align:right;font-size:14px;color:#ccd0d3">0</div>
<div class="abs" style="left:1184px;top:164px;height:40px;line-height:40px;font-size:13px;color:#38a0d8;white-space:nowrap;">Principal</div>
<div class="abs" style="left:1340px;top:164px;height:40px;line-height:40px;font-size:13px;color:#38a0d8;white-space:nowrap;">Support ReassortPro</div>
<div class="abs" style="left:0;top:205px;width:1646px;height:40px;background:#fff"></div>
<div class="abs" style="left:0;top:205px;width:130px;height:40px;background:#e9ecef"></div>
<div class="abs" style="left:0;top:245px;width:1646px;height:1px;background:#dee2e6"></div>
<div class="abs" style="left:8px;top:205px;height:40px;line-height:40px;font-size:13px;color:#3d454c;white-space:nowrap;">6</div>
<div class="abs" style="left:87px;top:215px;width:20px;height:20px;border:3px solid #d9dee1;background:linear-gradient(#f5f6f7,#fff 45%);border-radius:3px"></div>
<div class="abs" style="left:139px;top:205px;height:40px;line-height:40px;font-size:13px;color:#850f85;white-space:nowrap;">26/09/25 15:51:11</div>
<div class="abs" style="left:336px;top:219px;width:40px;height:14px"><svg width="11" height="12" viewBox="0 0 11 12" style="position:absolute;left:0;top:1px"><path d="M2.3 9.6L9 2.9" stroke="#38a0d8" stroke-width="3.4" stroke-linecap="round"/><path d="M3.1 8.8L7.4 4.5" stroke="rgba(255,255,255,.85)" stroke-width="1.25"/></svg><span style="position:absolute;left:13px;top:-1px;font-size:12.5px;color:#38a0d8">P14</span></div>
<div class="abs" style="left:439px;top:209px;font-size:13px;line-height:16px;color:#4a5157;white-space:nowrap">Bermuda Multipoches North Ways<br>Hugues brun et gris</div>
<div class="abs" style="left:700px;top:205px;height:40px;line-height:40px;font-size:13px;color:#4a5157;white-space:nowrap;">Réception</div>
<div class="abs" style="left:870px;top:205px;height:40px;line-height:40px;font-size:13px;color:#4a5157;white-space:nowrap;">Entrée</div>
<div class="abs" style="left:1022px;top:205px;width:40px;height:40px;line-height:40px;text-align:right;font-size:14px;font-weight:bold;color:#0808ee">4</div>
<div class="abs" style="left:1127px;top:205px;width:40px;height:40px;line-height:40px;text-align:right;font-size:14px;color:#ccd0d3">0</div>
<div class="abs" style="left:1184px;top:205px;height:40px;line-height:40px;font-size:13px;color:#4a5157;white-space:nowrap;">Principal</div>
<div class="abs" style="left:1340px;top:205px;height:40px;line-height:40px;font-size:13px;color:#4a5157;white-space:nowrap;">Support ReassortPro</div>
<div class="abs" style="left:0;top:246px;width:1646px;height:40px;background:#f5f6fa"></div>
<div class="abs" style="left:0;top:246px;width:130px;height:40px;background:#e9ecef"></div>
<div class="abs" style="left:0;top:286px;width:1646px;height:1px;background:#dee2e6"></div>
<div class="abs" style="left:8px;top:246px;height:40px;line-height:40px;font-size:13px;color:#3d454c;white-space:nowrap;">7</div>
<div class="abs" style="left:87px;top:256px;width:20px;height:20px;border:3px solid #d9dee1;background:linear-gradient(#f5f6f7,#fff 45%);border-radius:3px"></div>
<div class="abs" style="left:139px;top:246px;height:40px;line-height:40px;font-size:13px;color:#850f85;white-space:nowrap;">26/09/25 15:51:11</div>
<div class="abs" style="left:336px;top:260px;width:40px;height:14px"><svg width="11" height="12" viewBox="0 0 11 12" style="position:absolute;left:0;top:1px"><path d="M2.3 9.6L9 2.9" stroke="#38a0d8" stroke-width="3.4" stroke-linecap="round"/><path d="M3.1 8.8L7.4 4.5" stroke="rgba(255,255,255,.85)" stroke-width="1.25"/></svg><span style="position:absolute;left:13px;top:-1px;font-size:12.5px;color:#38a0d8">P13</span></div>
<div class="abs" style="left:439px;top:246px;height:40px;line-height:40px;font-size:13px;color:#4a5157;white-space:nowrap;">Agrafeuse E-TAC</div>
<div class="abs" style="left:700px;top:246px;height:40px;line-height:40px;font-size:13px;color:#4a5157;white-space:nowrap;">Réception</div>
<div class="abs" style="left:870px;top:246px;height:40px;line-height:40px;font-size:13px;color:#4a5157;white-space:nowrap;">Entrée</div>
<div class="abs" style="left:1022px;top:246px;width:40px;height:40px;line-height:40px;text-align:right;font-size:14px;font-weight:bold;color:#0808ee">40</div>
<div class="abs" style="left:1127px;top:246px;width:40px;height:40px;line-height:40px;text-align:right;font-size:14px;color:#ccd0d3">0</div>
<div class="abs" style="left:1184px;top:246px;height:40px;line-height:40px;font-size:13px;color:#4a5157;white-space:nowrap;">Principal</div>
<div class="abs" style="left:1340px;top:246px;height:40px;line-height:40px;font-size:13px;color:#4a5157;white-space:nowrap;">Support ReassortPro</div>
<div class="abs" style="left:0;top:287px;width:1646px;height:40px;background:#fff"></div>
<div class="abs" style="left:0;top:287px;width:130px;height:40px;background:#e9ecef"></div>
<div class="abs" style="left:0;top:327px;width:1646px;height:1px;background:#dee2e6"></div>
<div class="abs" style="left:8px;top:287px;height:40px;line-height:40px;font-size:13px;color:#3d454c;white-space:nowrap;">8</div>
<div class="abs" style="left:87px;top:297px;width:20px;height:20px;border:3px solid #d9dee1;background:linear-gradient(#f5f6f7,#fff 45%);border-radius:3px"></div>
<div class="abs" style="left:139px;top:287px;height:40px;line-height:40px;font-size:13px;color:#850f85;white-space:nowrap;">26/09/25 15:51:11</div>
<div class="abs" style="left:336px;top:301px;width:40px;height:14px"><svg width="11" height="12" viewBox="0 0 11 12" style="position:absolute;left:0;top:1px"><path d="M2.3 9.6L9 2.9" stroke="#38a0d8" stroke-width="3.4" stroke-linecap="round"/><path d="M3.1 8.8L7.4 4.5" stroke="rgba(255,255,255,.85)" stroke-width="1.25"/></svg><span style="position:absolute;left:13px;top:-1px;font-size:12.5px;color:#38a0d8">P13</span></div>
<div class="abs" style="left:439px;top:287px;height:40px;line-height:40px;font-size:13px;color:#4a5157;white-space:nowrap;">Agrafeuse E-TAC</div>
<div class="abs" style="left:700px;top:287px;height:40px;line-height:40px;font-size:13px;color:#4a5157;white-space:nowrap;">Réception</div>
<div class="abs" style="left:870px;top:287px;height:40px;line-height:40px;font-size:13px;color:#4a5157;white-space:nowrap;">Entrée</div>
<div class="abs" style="left:1022px;top:287px;width:40px;height:40px;line-height:40px;text-align:right;font-size:14px;font-weight:bold;color:#0808ee">2</div>
<div class="abs" style="left:1127px;top:287px;width:40px;height:40px;line-height:40px;text-align:right;font-size:14px;color:#ccd0d3">0</div>
<div class="abs" style="left:1184px;top:287px;height:40px;line-height:40px;font-size:13px;color:#4a5157;white-space:nowrap;">Principal</div>
<div class="abs" style="left:1340px;top:287px;height:40px;line-height:40px;font-size:13px;color:#4a5157;white-space:nowrap;">Support ReassortPro</div>
<div class="abs" style="left:0;top:328px;width:1646px;height:40px;background:#f5f6fa"></div>
<div class="abs" style="left:0;top:328px;width:130px;height:40px;background:#e9ecef"></div>
<div class="abs" style="left:0;top:368px;width:1646px;height:1px;background:#dee2e6"></div>
<div class="abs" style="left:8px;top:328px;height:40px;line-height:40px;font-size:13px;color:#3d454c;white-space:nowrap;">9</div>
<div class="abs" style="left:87px;top:338px;width:20px;height:20px;border:3px solid #d9dee1;background:linear-gradient(#f5f6f7,#fff 45%);border-radius:3px"></div>
<div class="abs" style="left:139px;top:328px;height:40px;line-height:40px;font-size:13px;color:#850f85;white-space:nowrap;">26/09/25 10:31:39</div>
<div class="abs" style="left:336px;top:342px;width:40px;height:14px"><svg width="11" height="12" viewBox="0 0 11 12" style="position:absolute;left:0;top:1px"><path d="M2.3 9.6L9 2.9" stroke="#38a0d8" stroke-width="3.4" stroke-linecap="round"/><path d="M3.1 8.8L7.4 4.5" stroke="rgba(255,255,255,.85)" stroke-width="1.25"/></svg><span style="position:absolute;left:13px;top:-1px;font-size:12.5px;color:#38a0d8">P1</span></div>
<div class="abs" style="left:439px;top:332px;font-size:13px;line-height:16px;color:#4a5157;white-space:nowrap">Chaussure de sécurité haute Agate II cuir<br>pleine fleur S3 SRC couleur noir</div>
<div class="abs" style="left:700px;top:328px;height:40px;line-height:40px;font-size:13px;color:#4a5157;white-space:nowrap;">Sortie Picking</div>
<div class="abs" style="left:870px;top:328px;height:40px;line-height:40px;font-size:13px;color:#4a5157;white-space:nowrap;">Sortie</div>
<div class="abs" style="left:1022px;top:328px;width:40px;height:40px;line-height:40px;text-align:right;font-size:14px;color:#ccd0d3">0</div>
<div class="abs" style="left:1127px;top:328px;width:40px;height:40px;line-height:40px;text-align:right;font-size:14px;font-weight:bold;color:#0808ee">2</div>
<div class="abs" style="left:1184px;top:328px;height:40px;line-height:40px;font-size:13px;color:#4a5157;white-space:nowrap;">Principal</div>
<div class="abs" style="left:1340px;top:328px;height:40px;line-height:40px;font-size:13px;color:#4a5157;white-space:nowrap;">Support ReassortPro</div>
<div class="abs" style="left:1497px;top:328px;height:40px;line-height:40px;font-size:13px;color:#4a5157;white-space:nowrap;">Commande de stock</div>
<div class="abs" style="left:0;top:369px;width:1646px;height:40px;background:#fff"></div>
<div class="abs" style="left:0;top:369px;width:130px;height:40px;background:#e9ecef"></div>
<div class="abs" style="left:0;top:409px;width:1646px;height:1px;background:#dee2e6"></div>
<div class="abs" style="left:8px;top:369px;height:40px;line-height:40px;font-size:13px;color:#3d454c;white-space:nowrap;">10</div>
<div class="abs" style="left:87px;top:379px;width:20px;height:20px;border:3px solid #d9dee1;background:linear-gradient(#f5f6f7,#fff 45%);border-radius:3px"></div>
<div class="abs" style="left:139px;top:369px;height:40px;line-height:40px;font-size:13px;color:#850f85;white-space:nowrap;">01/09/25 10:36:25</div>
<div class="abs" style="left:336px;top:383px;width:40px;height:14px"><svg width="11" height="12" viewBox="0 0 11 12" style="position:absolute;left:0;top:1px"><path d="M2.3 9.6L9 2.9" stroke="#38a0d8" stroke-width="3.4" stroke-linecap="round"/><path d="M3.1 8.8L7.4 4.5" stroke="rgba(255,255,255,.85)" stroke-width="1.25"/></svg><span style="position:absolute;left:13px;top:-1px;font-size:12.5px;color:#38a0d8">P13</span></div>
<div class="abs" style="left:439px;top:369px;height:40px;line-height:40px;font-size:13px;color:#4a5157;white-space:nowrap;">Agrafeuse E-TAC</div>
<div class="abs" style="left:700px;top:369px;height:40px;line-height:40px;font-size:13px;color:#4a5157;white-space:nowrap;">Sortie Picking</div>
<div class="abs" style="left:870px;top:369px;height:40px;line-height:40px;font-size:13px;color:#4a5157;white-space:nowrap;">Sortie</div>
<div class="abs" style="left:1022px;top:369px;width:40px;height:40px;line-height:40px;text-align:right;font-size:14px;color:#ccd0d3">0</div>
<div class="abs" style="left:1127px;top:369px;width:40px;height:40px;line-height:40px;text-align:right;font-size:14px;font-weight:bold;color:#0808ee">6</div>
<div class="abs" style="left:1184px;top:369px;height:40px;line-height:40px;font-size:13px;color:#4a5157;white-space:nowrap;">Principal</div>
<div class="abs" style="left:1340px;top:369px;height:40px;line-height:40px;font-size:13px;color:#4a5157;white-space:nowrap;">Pascal Dervaux</div>
<div class="abs" style="left:1497px;top:369px;height:40px;line-height:40px;font-size:13px;color:#4a5157;white-space:nowrap;">Commande de stock</div>
<div class="abs" style="left:0;top:410px;width:1646px;height:40px;background:#f5f6fa"></div>
<div class="abs" style="left:0;top:410px;width:130px;height:40px;background:#e9ecef"></div>
<div class="abs" style="left:0;top:450px;width:1646px;height:1px;background:#dee2e6"></div>
<div class="abs" style="left:8px;top:410px;height:40px;line-height:40px;font-size:13px;color:#3d454c;white-space:nowrap;">11</div>
<div class="abs" style="left:87px;top:420px;width:20px;height:20px;border:3px solid #d9dee1;background:linear-gradient(#f5f6f7,#fff 45%);border-radius:3px"></div>
<div class="abs" style="left:139px;top:410px;height:40px;line-height:40px;font-size:13px;color:#850f85;white-space:nowrap;">01/09/25 10:36:25</div>
<div class="abs" style="left:336px;top:424px;width:40px;height:14px"><svg width="11" height="12" viewBox="0 0 11 12" style="position:absolute;left:0;top:1px"><path d="M2.3 9.6L9 2.9" stroke="#38a0d8" stroke-width="3.4" stroke-linecap="round"/><path d="M3.1 8.8L7.4 4.5" stroke="rgba(255,255,255,.85)" stroke-width="1.25"/></svg><span style="position:absolute;left:13px;top:-1px;font-size:12.5px;color:#38a0d8">P13</span></div>
<div class="abs" style="left:439px;top:410px;height:40px;line-height:40px;font-size:13px;color:#4a5157;white-space:nowrap;">Agrafeuse E-TAC</div>
<div class="abs" style="left:700px;top:410px;height:40px;line-height:40px;font-size:13px;color:#4a5157;white-space:nowrap;">Sortie Picking</div>
<div class="abs" style="left:870px;top:410px;height:40px;line-height:40px;font-size:13px;color:#4a5157;white-space:nowrap;">Sortie</div>
<div class="abs" style="left:1022px;top:410px;width:40px;height:40px;line-height:40px;text-align:right;font-size:14px;color:#ccd0d3">0</div>
<div class="abs" style="left:1127px;top:410px;width:40px;height:40px;line-height:40px;text-align:right;font-size:14px;font-weight:bold;color:#0808ee">6</div>
<div class="abs" style="left:1184px;top:410px;height:40px;line-height:40px;font-size:13px;color:#4a5157;white-space:nowrap;">Principal</div>
<div class="abs" style="left:1340px;top:410px;height:40px;line-height:40px;font-size:13px;color:#4a5157;white-space:nowrap;">Pascal Dervaux</div>
<div class="abs" style="left:1497px;top:410px;height:40px;line-height:40px;font-size:13px;color:#4a5157;white-space:nowrap;">Commande de stock</div>
</div>
<div class="abs" style="left:318px;top:151px;width:1px;height:531px;background:#dee2e6"></div>
<div class="abs" style="left:384px;top:151px;width:1px;height:531px;background:#dee2e6"></div>
<div class="abs" style="left:580px;top:151px;width:1px;height:531px;background:#dee2e6"></div>
<div class="abs" style="left:684px;top:151px;width:1px;height:531px;background:#dee2e6"></div>
<div class="abs" style="left:945px;top:151px;width:1px;height:531px;background:#dee2e6"></div>
<div class="abs" style="left:1115px;top:151px;width:1px;height:531px;background:#dee2e6"></div>
<div class="abs" style="left:1220px;top:151px;width:1px;height:531px;background:#dee2e6"></div>
<div class="abs" style="left:1324px;top:151px;width:1px;height:531px;background:#dee2e6"></div>
<div class="abs" style="left:1429px;top:151px;width:1px;height:531px;background:#dee2e6"></div>
<div class="abs" style="left:1585px;top:151px;width:1px;height:531px;background:#dee2e6"></div>
<div class="abs" style="left:1742px;top:151px;width:1px;height:531px;background:#dee2e6"></div>
<div class="abs" style="left:385px;top:151px;width:6px;height:531px;background:linear-gradient(90deg,rgba(0,0,0,.045),rgba(0,0,0,0))"></div>
<div class="abs" style="left:262px;top:165px;font-size:11px;font-weight:bold;color:#3a4550;letter-spacing:-0.4px;white-space:nowrap">#</div>
<div class="abs" style="left:341px;top:161px;width:20px;height:20px;border:3px solid #d9dee1;background:linear-gradient(#f5f6f7,#fff 45%);border-radius:3px"></div>
<div class="abs" style="left:390px;top:166px;width:3px;height:11px"><svg width="3" height="11" viewBox="0 0 3 11" style="position:absolute;left:0;top:0"><circle cx="1.5" cy="1.5" r="1.4" fill="#1f2b33"/><circle cx="1.5" cy="5.5" r="1.4" fill="#1f2b33"/><circle cx="1.5" cy="9.5" r="1.4" fill="#1f2b33"/></svg></div>
<div class="abs" style="left:399px;top:165px;font-size:11px;font-weight:bold;color:#3a4550;letter-spacing:-0.4px;white-space:nowrap">DATE</div>
<div class="abs" style="left:586px;top:166px;width:3px;height:11px"><svg width="3" height="11" viewBox="0 0 3 11" style="position:absolute;left:0;top:0"><circle cx="1.5" cy="1.5" r="1.4" fill="#1f2b33"/><circle cx="1.5" cy="5.5" r="1.4" fill="#1f2b33"/><circle cx="1.5" cy="9.5" r="1.4" fill="#1f2b33"/></svg></div>
<div class="abs" style="left:595px;top:165px;font-size:11px;font-weight:bold;color:#3a4550;letter-spacing:-0.4px;white-space:nowrap">CODE</div>
<div class="abs" style="left:690px;top:166px;width:3px;height:11px"><svg width="3" height="11" viewBox="0 0 3 11" style="position:absolute;left:0;top:0"><circle cx="1.5" cy="1.5" r="1.4" fill="#1f2b33"/><circle cx="1.5" cy="5.5" r="1.4" fill="#1f2b33"/><circle cx="1.5" cy="9.5" r="1.4" fill="#1f2b33"/></svg></div>
<div class="abs" style="left:699px;top:165px;font-size:11px;font-weight:bold;color:#3a4550;letter-spacing:-0.4px;white-space:nowrap">DESIGNATION</div>
<div class="abs" style="left:951px;top:166px;width:3px;height:11px"><svg width="3" height="11" viewBox="0 0 3 11" style="position:absolute;left:0;top:0"><circle cx="1.5" cy="1.5" r="1.4" fill="#1f2b33"/><circle cx="1.5" cy="5.5" r="1.4" fill="#1f2b33"/><circle cx="1.5" cy="9.5" r="1.4" fill="#1f2b33"/></svg></div>
<div class="abs" style="left:960px;top:165px;font-size:11px;font-weight:bold;color:#3a4550;letter-spacing:-0.4px;white-space:nowrap">RAISON</div>
<div class="abs" style="left:1121px;top:166px;width:3px;height:11px"><svg width="3" height="11" viewBox="0 0 3 11" style="position:absolute;left:0;top:0"><circle cx="1.5" cy="1.5" r="1.4" fill="#1f2b33"/><circle cx="1.5" cy="5.5" r="1.4" fill="#1f2b33"/><circle cx="1.5" cy="9.5" r="1.4" fill="#1f2b33"/></svg></div>
<div class="abs" style="left:1130px;top:165px;font-size:11px;font-weight:bold;color:#3a4550;letter-spacing:-0.4px;white-space:nowrap">DIRECTION</div>
<div class="abs" style="left:1435px;top:166px;width:3px;height:11px"><svg width="3" height="11" viewBox="0 0 3 11" style="position:absolute;left:0;top:0"><circle cx="1.5" cy="1.5" r="1.4" fill="#1f2b33"/><circle cx="1.5" cy="5.5" r="1.4" fill="#1f2b33"/><circle cx="1.5" cy="9.5" r="1.4" fill="#1f2b33"/></svg></div>
<div class="abs" style="left:1444px;top:165px;font-size:11px;font-weight:bold;color:#3a4550;letter-spacing:-0.4px;white-space:nowrap">ENTREPOT</div>
<div class="abs" style="left:1591px;top:166px;width:3px;height:11px"><svg width="3" height="11" viewBox="0 0 3 11" style="position:absolute;left:0;top:0"><circle cx="1.5" cy="1.5" r="1.4" fill="#1f2b33"/><circle cx="1.5" cy="5.5" r="1.4" fill="#1f2b33"/><circle cx="1.5" cy="9.5" r="1.4" fill="#1f2b33"/></svg></div>
<div class="abs" style="left:1600px;top:165px;font-size:11px;font-weight:bold;color:#3a4550;letter-spacing:-0.4px;white-space:nowrap">UTILISATEUR</div>
<div class="abs" style="left:1748px;top:166px;width:3px;height:11px"><svg width="3" height="11" viewBox="0 0 3 11" style="position:absolute;left:0;top:0"><circle cx="1.5" cy="1.5" r="1.4" fill="#1f2b33"/><circle cx="1.5" cy="5.5" r="1.4" fill="#1f2b33"/><circle cx="1.5" cy="9.5" r="1.4" fill="#1f2b33"/></svg></div>
<div class="abs" style="left:1757px;top:165px;font-size:11px;font-weight:bold;color:#3a4550;letter-spacing:-0.4px;white-space:nowrap">COMMENTAIRE</div>
<div class="abs" style="left:1226px;top:166px;width:3px;height:11px"><svg width="3" height="11" viewBox="0 0 3 11" style="position:absolute;left:0;top:0"><circle cx="1.5" cy="1.5" r="1.4" fill="#1f2b33"/><circle cx="1.5" cy="5.5" r="1.4" fill="#1f2b33"/><circle cx="1.5" cy="9.5" r="1.4" fill="#1f2b33"/></svg></div>
<div class="abs" style="left:1235px;top:157px;font-size:11px;font-weight:bold;color:#3a4550;letter-spacing:-0.4px;white-space:nowrap;line-height:16px">QUANTITÉ<br>ENTRANTE</div>
<div class="abs" style="left:1330px;top:166px;width:3px;height:11px"><svg width="3" height="11" viewBox="0 0 3 11" style="position:absolute;left:0;top:0"><circle cx="1.5" cy="1.5" r="1.4" fill="#1f2b33"/><circle cx="1.5" cy="5.5" r="1.4" fill="#1f2b33"/><circle cx="1.5" cy="9.5" r="1.4" fill="#1f2b33"/></svg></div>
<div class="abs" style="left:1339px;top:157px;font-size:11px;font-weight:bold;color:#3a4550;letter-spacing:-0.4px;white-space:nowrap;line-height:16px">QUANTITÉ<br>SORTANTE</div>
<div class="abs" style="left:393px;top:197px;width:36px;height:36px;border-radius:5px;background:#dde1e5"></div>
<svg class="abs" style="left:402px;top:206px" width="18" height="18" viewBox="0 0 18 18"><rect x="2.1" y="2.7" width="13.8" height="14.2" rx="1.6" fill="none" stroke="#1f2b33" stroke-width="1.8"/><path d="M2 6h14" stroke="#1f2b33" stroke-width="1.5"/><path d="M5.3 0.2v2.6M13.3 0.2v2.6" stroke="#1f2b33" stroke-width="1.5"/><circle cx="5.6" cy="9.6" r=".9" fill="#1f2b33"/><circle cx="9" cy="9.6" r=".9" fill="#1f2b33"/><circle cx="12.4" cy="9.6" r=".9" fill="#1f2b33"/></svg>
<div class="abs" style="left:589px;top:197px;width:86px;height:36px;background:#fff;border:1px solid #d6dbdf;border-radius:5px;box-shadow:inset 0 3px 3px -1px rgba(0,0,0,.045)"></div>
<div class="abs" style="left:693px;top:197px;width:243px;height:36px;background:#fff;border:1px solid #d6dbdf;border-radius:5px;box-shadow:inset 0 3px 3px -1px rgba(0,0,0,.045)"></div>
<div class="abs" style="left:954px;top:197px;width:152px;height:36px;background:#fff;border:1px solid #d6dbdf;border-radius:5px;box-shadow:inset 0 3px 3px -1px rgba(0,0,0,.045)"></div>
<div class="abs" style="left:1124px;top:197px;width:87px;height:36px;background:#fff;border:1px solid #d6dbdf;border-radius:5px;box-shadow:inset 0 3px 3px -1px rgba(0,0,0,.045)"></div>
<div class="abs" style="left:1438px;top:197px;width:138px;height:36px;background:#fff;border:1px solid #d6dbdf;border-radius:5px;box-shadow:inset 0 3px 3px -1px rgba(0,0,0,.045)"></div>
<div class="abs" style="left:1594px;top:197px;width:139px;height:36px;background:#fff;border:1px solid #d6dbdf;border-radius:5px;box-shadow:inset 0 3px 3px -1px rgba(0,0,0,.045)"></div>
<div class="abs" style="left:1751px;top:197px;width:140px;height:36px;background:#fff;border:1px solid #d6dbdf;border-radius:5px;box-shadow:inset 0 3px 3px -1px rgba(0,0,0,.045)"></div>
<svg class="abs" style="left:1084px;top:213px" width="9" height="5" viewBox="0 0 9 5"><path d="M0 0h9L4.5 5z" fill="#2a3540"/></svg>
<svg class="abs" style="left:1189px;top:213px" width="9" height="5" viewBox="0 0 9 5"><path d="M0 0h9L4.5 5z" fill="#2a3540"/></svg>
<div class="abs" style="left:1451px;top:207px;font-size:16px;color:#1f2d3d">Tout</div>
<svg class="abs" style="left:1550px;top:211px" width="12" height="8" viewBox="0 0 12 8"><path d="M1 1.2l5 5 5-5" fill="none" stroke="#343a40" stroke-width="1.6"/></svg>
<div class="abs" style="left:1904px;top:155px;width:8px;height:8px;border-radius:4px;background:#38a0d8"></div>
<div class="abs" style="left:254px;top:684px;font-size:13px;color:#495057;white-space:nowrap">Nombre de mouvements : 3705</div>
<svg class="abs" style="left:1064px;top:704px" width="42" height="6" viewBox="0 0 42 6"><path d="M1 4.5l3-3 3 3z" fill="#9aa1a6"/><rect x="12" y="2" width="16" height="2" fill="#9aa1a6"/><path d="M35 2h6l-3 3z" fill="#9aa1a6"/></svg>
<!--/TABLE-->
</body></html>
